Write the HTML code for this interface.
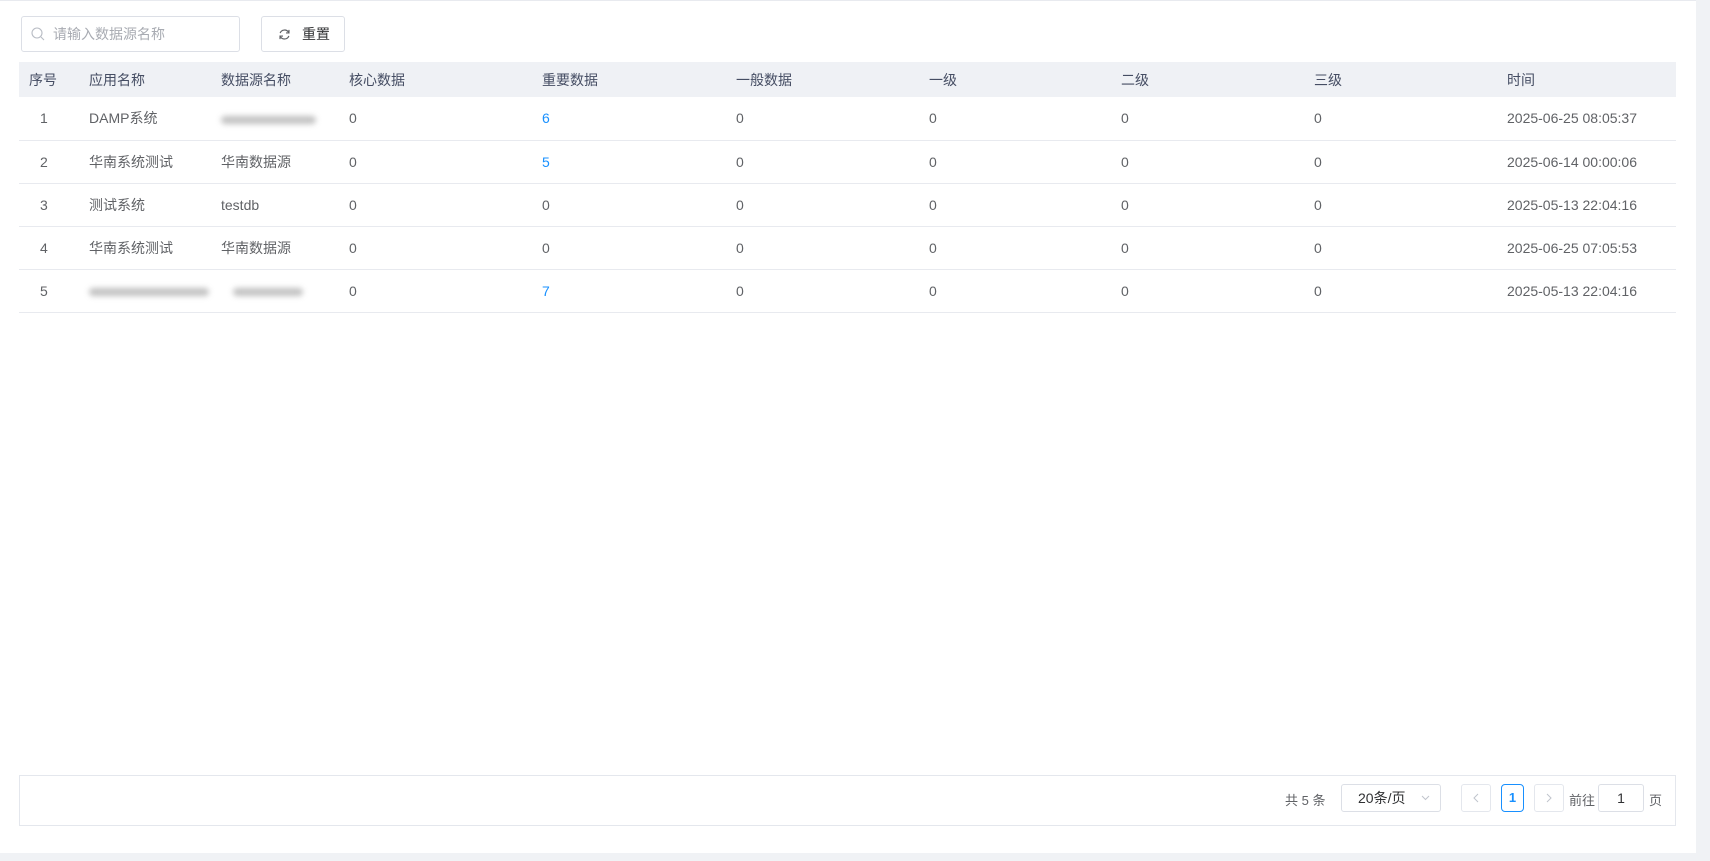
<!DOCTYPE html>
<html><head><meta charset="utf-8"><style>
*{box-sizing:border-box;margin:0;padding:0}
body{width:1710px;height:861px;background:#f0f2f5;font-family:"Liberation Sans","Noto Sans CJK SC",sans-serif;font-size:14px;color:#606266;position:relative;overflow:hidden}
.panel{position:absolute;left:0;top:0;width:1696px;height:853px;background:#fff;border-top:1px solid #e8eaef}
.search{position:absolute;left:21px;top:15px;width:219px;height:36px;border:1px solid #dcdfe6;border-radius:3px;color:#a8abb2;font-size:14px;line-height:34px;padding-left:31px}
.search svg{position:absolute;left:9px;top:10px}
.btn{position:absolute;left:261px;top:15px;width:84px;height:36px;border:1px solid #dcdfe6;border-radius:3px;color:#303133;line-height:34px;padding-left:40px}
.btn svg{position:absolute;left:16px;top:11px}
table{position:absolute;left:19px;top:61px;width:1657px;border-collapse:collapse;table-layout:fixed}
th{background:#eff1f5;height:35px;text-align:left;font-weight:normal;color:#454d63;padding-left:10px;font-size:14px}
td{height:43px;border-bottom:1px solid #e8eaef;padding-left:10px;color:#606266}
th.c{padding-left:10px}
td.c{padding-left:21px}
.blue{color:#1890ff}
.blur{display:inline-block;height:8px;background:#999;filter:blur(3px);border-radius:4px;vertical-align:middle;opacity:.6}
.pg{position:absolute;left:19px;top:774px;width:1657px;height:51px;border:1px solid #e4e7ed}
.pg .t{position:absolute;top:0;line-height:49px;font-size:13px;color:#606266}
.box{position:absolute;top:8px;height:28px;border:1px solid #dcdfe6;border-radius:3px;text-align:center;line-height:26px;font-size:13px;color:#303133}
</style></head><body>
<div class="panel">
<div class="search"><svg width="14" height="14" viewBox="0 0 14 14"><circle cx="6" cy="6" r="5" fill="none" stroke="#b8bcc4" stroke-width="1.1"/><path d="M10 10l3 3" stroke="#b8bcc4" stroke-width="1.1"/></svg>请输入数据源名称</div>
<div class="btn"><svg width="13" height="13" viewBox="0 0 14 14"><path d="M11.5 5A5 5 0 0 0 2.3 5.5M2.5 9A5 5 0 0 0 11.7 8.5" fill="none" stroke="#606266" stroke-width="1.3"/><path d="M11.8 2v3.3H8.6M2.2 12V8.7h3.2" fill="none" stroke="#606266" stroke-width="1.3"/></svg>重置</div>
<table>
<colgroup><col style="width:60px"><col style="width:132px"><col style="width:128px"><col style="width:193px"><col style="width:194px"><col style="width:193px"><col style="width:192px"><col style="width:193px"><col style="width:193px"><col></colgroup>
<tr><th class="c">序号</th><th>应用名称</th><th>数据源名称</th><th>核心数据</th><th>重要数据</th><th>一般数据</th><th>一级</th><th>二级</th><th>三级</th><th>时间</th></tr>
<tr><td class="c">1</td><td>DAMP系统</td><td><span class="blur" style="width:95px"></span></td><td>0</td><td class="blue">6</td><td>0</td><td>0</td><td>0</td><td>0</td><td>2025-06-25 08:05:37</td></tr>
<tr><td class="c">2</td><td>华南系统测试</td><td>华南数据源</td><td>0</td><td class="blue">5</td><td>0</td><td>0</td><td>0</td><td>0</td><td>2025-06-14 00:00:06</td></tr>
<tr><td class="c">3</td><td>测试系统</td><td>testdb</td><td>0</td><td>0</td><td>0</td><td>0</td><td>0</td><td>0</td><td>2025-05-13 22:04:16</td></tr>
<tr><td class="c">4</td><td>华南系统测试</td><td>华南数据源</td><td>0</td><td>0</td><td>0</td><td>0</td><td>0</td><td>0</td><td>2025-06-25 07:05:53</td></tr>
<tr><td class="c">5</td><td><span class="blur" style="width:120px"></span></td><td><span class="blur" style="width:70px;margin-left:12px"></span></td><td>0</td><td class="blue">7</td><td>0</td><td>0</td><td>0</td><td>0</td><td>2025-05-13 22:04:16</td></tr>
</table>
<div class="pg">
<span class="t" style="left:1265px">共 5 条</span>
<div class="box" style="left:1321px;width:100px;font-size:14px;text-align:left;padding-left:16px">20条/页<svg style="position:absolute;right:10px;top:10px" width="9" height="6" viewBox="0 0 9 6"><path d="M1 1l3.5 3.5L8 1" fill="none" stroke="#c0c4cc"/></svg></div>
<div class="box" style="left:1441px;width:30px;border-color:#e4e7ed"><svg width="6" height="10" viewBox="0 0 6 10" style="margin-top:8px"><path d="M5 1L1 5l4 4" fill="none" stroke="#c0c4cc"/></svg></div>
<div class="box" style="left:1481px;width:23px;border-color:#1890ff;color:#1890ff;font-weight:bold;border-radius:4px">1</div>
<div class="box" style="left:1514px;width:30px;border-color:#e4e7ed"><svg width="6" height="10" viewBox="0 0 6 10" style="margin-top:8px"><path d="M1 1l4 4-4 4" fill="none" stroke="#c0c4cc"/></svg></div>
<span class="t" style="left:1549px">前往</span>
<div class="box" style="left:1578px;width:46px;font-size:14px">1</div>
<span class="t" style="left:1629px">页</span>
</div>
</div>
</body></html>
